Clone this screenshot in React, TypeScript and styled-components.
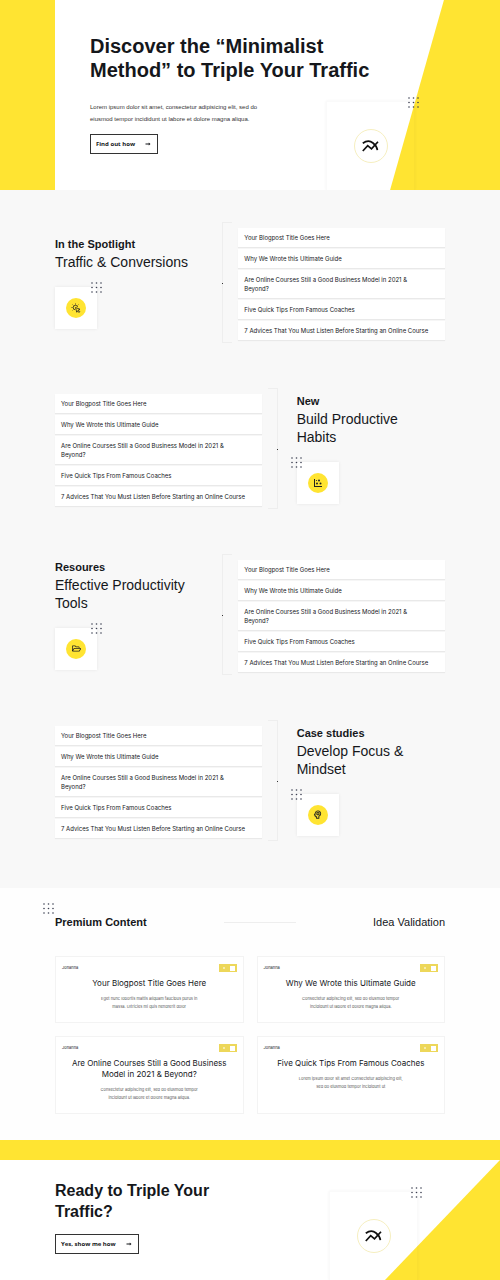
import React from 'react';
import styled, { createGlobalStyle } from 'styled-components';
import { MdOutlinePsychology } from 'react-icons/md';
import { FaRegFolderOpen } from 'react-icons/fa';

const YELLOW = '#ffe432';
const INK = '#15171b';

const GlobalStyle = createGlobalStyle`
  *, *::before, *::after { box-sizing: border-box; }
  body {
    margin: 0;
    background: #fefefe;
    color: ${INK};
    font-family: 'Liberation Sans', Arial, sans-serif;
  }
  h1, h2, h3, p, ul { margin: 0; padding: 0; }
`;

const Banner = styled.header`
  position: relative;
  overflow: hidden;
  padding: 34px 17% 0 18%;
  background: ${YELLOW};

  &::before {
    content: '';
    position: absolute;
    inset: 0 0 0 11%;
    background: #fff;
    clip-path: polygon(0 0, 87.4% 0, 75.3% 100%, 0 100%);
  }
`;

const BannerTitle = styled.h1`
  position: relative;
  margin-right: -20px;
  font-size: 20px;
  line-height: 24px;
`;

const BannerRow = styled.div`
  position: relative;
  display: flex;
  justify-content: space-between;
  align-items: flex-start;
  margin-top: 19px;
`;

const Lead = styled.p`
  margin-bottom: 9px;
  font-size: 6px;
  line-height: 12px;
  color: #333;
`;

const ActionButton = styled.button`
  display: flex;
  align-items: center;
  gap: 10px;
  width: fit-content;
  height: 20px;
  padding: 0 6px 0 5px;
  border: 1px solid #333;
  background: #fff;
  color: ${INK};
  font: 700 6px/12px 'Open Sans', sans-serif;
  white-space: nowrap;
`;

const ChartCard = styled.div`
  position: relative;
  flex: 0 0 89px;
  height: 89px;
  display: flex;
  align-items: center;
  justify-content: center;
  border: 1px solid rgba(0, 0, 0, 0.02);
  border-bottom: 0;
  box-shadow: 0 0 3px rgba(0, 0, 0, 0.05);
`;

const Ring = styled.span`
  display: flex;
  align-items: center;
  justify-content: center;
  width: 34px;
  height: 34px;
  border: 1px solid #f6efc0;
  border-radius: 50%;
  background: #fff;
  color: #111;
`;

const DotsSvg = styled.svg<{ $side: 'left' | 'right' | 'outside' }>`
  position: absolute;
  top: ${p => (p.$side === 'outside' ? '-11px' : '-5px')};
  ${p => (p.$side === 'right' ? 'right: -5px;' : p.$side === 'left' ? 'left: -6px;' : 'left: -12px;')}
  width: 11px;
  height: 11px;
  fill: #3d4152;
`;

const Spotlights = styled.main`
  display: flex;
  flex-direction: column;
  gap: 45px;
  padding: 32px 11% 47px;
  background: #f8f8f8;
`;

const Topic = styled.section<{ $flip: boolean }>`
  display: flex;
  flex-direction: ${p => (p.$flip ? 'row-reverse' : 'row')};
  align-items: center;
  min-height: 121px;
`;

const TopicIntro = styled.div<{ $flip: boolean }>`
  flex: 1;
  padding-left: ${p => (p.$flip ? '19px' : '0')};
`;

const TopicLabel = styled.h2`
  margin-bottom: 1px;
  font-size: 11px;
  line-height: 15px;
`;

const TopicTitle = styled.h3`
  max-width: 140px;
  margin-bottom: 16px;
  font-size: 14px;
  font-weight: 400;
  line-height: 18px;
`;

const IconCard = styled.div`
  position: relative;
  display: flex;
  align-items: center;
  justify-content: center;
  width: 42px;
  height: 42px;
  background: #fff;
  box-shadow: 0 0 3px rgba(0, 0, 0, 0.08);
`;

const IconDisc = styled.span`
  display: flex;
  align-items: center;
  justify-content: center;
  width: 20px;
  height: 20px;
  border-radius: 50%;
  background: ${YELLOW};
  color: #222;
`;

const Bracket = styled.div<{ $flip: boolean }>`
  position: relative;
  align-self: stretch;
  width: 10px;
  margin: ${p => (p.$flip ? '0 0 0 6px' : '0 6px 0 0')};
  border: 1px solid #eeeeee;
  border-${p => (p.$flip ? 'left' : 'right')}: 0;

  &::after {
    content: '';
    position: absolute;
    top: 60px;
    ${p => (p.$flip ? 'right' : 'left')}: -1px;
    width: 1px;
    height: 1px;
    background: #333;
  }
`;

const PostList = styled.ul`
  flex: 0 0 53%;
  display: flex;
  flex-direction: column;
  gap: 2px;
  padding-top: 2px;
  list-style: none;
`;

const PostItem = styled.li`
  padding: 5px 15px 5px 6px;
  background: #fff;
  box-shadow: 0 1px 1px rgba(0, 0, 0, 0.06);
  font-family: Inter, sans-serif;
  font-size: 6px;
  line-height: 9px;
`;

const PostLink = styled.a`
  display: block;
  color: inherit;
  text-decoration: none;
`;

const Premium = styled.section`
  padding: 26px 11%;
  background: #fefefe;
`;

const PremiumHead = styled.div`
  position: relative;
  display: flex;
  align-items: center;
  justify-content: space-between;
  margin-bottom: 26px;
  line-height: 16px;
`;

const PremiumTitle = styled.h2`
  font-size: 11px;
`;

const PremiumTopic = styled.p`
  font-size: 11px;
`;

const Rule = styled.span`
  width: 72px;
  height: 1px;
  background: #eeeeee;
`;

const CardGrid = styled.div`
  display: grid;
  grid-template-columns: 1fr 1fr;
  gap: 13px;
`;

const Card = styled.article`
  padding: 7px 6px 11px;
  border: 1px solid #f3f3f3;
  background: #fff;
  font-family: Inter, sans-serif;
  text-align: center;
`;

const CardTop = styled.div`
  display: flex;
  align-items: flex-start;
  justify-content: space-between;
  height: 14px;
  font-size: 4px;
  line-height: 8px;
`;

const Toggle = styled.input`
  appearance: none;
  position: relative;
  width: 18px;
  height: 8px;
  margin: 0;
  background: #edd75a;

  &::before {
    content: '';
    position: absolute;
    top: 3px;
    left: 4px;
    width: 2px;
    height: 2px;
    background: #f6ebac;
  }

  &::after {
    content: '';
    position: absolute;
    top: 2px;
    right: 2px;
    width: 5px;
    height: 5px;
    background: #fff;
  }
`;

const CardTitle = styled.h3`
  max-width: 164px;
  margin: 0 auto 6px;
  font-size: 8px;
  font-weight: 400;
  line-height: 11px;
`;

const CardText = styled.p`
  font-size: 4px;
  line-height: 8px;
  color: #555;
`;

const Closing = styled.footer`
  position: relative;
  display: flex;
  justify-content: space-between;
  overflow: hidden;
  padding: 20px 82px 0 11%;
  border-top: 20px solid ${YELLOW};
  background: #fff;

  &::before {
    content: '';
    position: absolute;
    inset: 0;
    background: ${YELLOW};
    clip-path: polygon(100% 0, 100% 100%, 77% 100%);
  }
`;

const ClosingCopy = styled.div`
  position: relative;
  flex: 0 1 180px;
`;

const ClosingTitle = styled.h2`
  margin-bottom: 12px;
  font-size: 16px;
  line-height: 21px;
`;

const ClosingArt = styled.div`
  display: flex;
  margin-top: 11px;
`;

const Dots = ({ side }: { side: 'left' | 'right' | 'outside' }) => (
  <DotsSvg $side={side} viewBox="0 0 11 11" aria-hidden="true">
    {[1, 5.5, 10].map(y => [1, 5.5, 10].map(x => <circle key={`${x}-${y}`} cx={x} cy={y} r="0.8" />))}
  </DotsSvg>
);

const ScatterIcon = () => (
  <svg width="10" height="10" viewBox="0 0 20 20" fill="currentColor" aria-hidden="true">
    <path d="M2 2h2v14h14v2H2z" />
    <circle cx="8" cy="11" r="2" />
    <circle cx="12" cy="5" r="2" />
    <circle cx="15" cy="11" r="2" />
    <circle cx="7" cy="5" r="1.2" />
  </svg>
);

const ClickIcon = () => (
  <svg width="10" height="10" viewBox="0 0 20 20" fill="none" stroke="currentColor" strokeWidth="1.6" aria-hidden="true">
    <path d="M8 13.500A4.500 4.500 0 1 1 13.300 8" />
    <path d="M9 1v2M3.300 3.300l1.400 1.400M1 9h2M3.300 14.700l1.400-1.400M14.700 3.300l-1.400 1.400" />
    <path d="M9 9l9 3.500-3.500 1.500 3 3.500-1.500 1.500-3-3.500-1.500 3z" />
  </svg>
);

const TrendIcon = () => (
  <svg width="17" height="12" viewBox="0 0 17 12" fill="none" stroke="currentColor" strokeWidth="1.7" aria-hidden="true">
    <path d="M0.800 3.300C4 1 8 0.600 11 3C13.500 5 15 7 15.400 10.200" />
    <path d="M0.800 11L5.700 5.600L9.500 8.900L16 1.700" />
  </svg>
);

const Arrow = () => (
  <svg width="6" height="6" viewBox="0 0 12 12" aria-hidden="true">
    <path d="M1 5.200h6.500V3L11 6 7.500 9V6.800H1z" fill="currentColor" />
  </svg>
);

const Chart = () => (
  <ChartCard>
    <Ring>
      <TrendIcon />
    </Ring>
    <Dots side="right" />
  </ChartCard>
);

const posts = [
  'Your Blogpost Title Goes Here',
  'Why We Wrote this Ultimate Guide',
  'Are Online Courses Still a Good Business Model in 2021 & Beyond?',
  'Five Quick Tips From Famous Coaches',
  '7 Advices That You Must Listen Before Starting an Online Course',
];

const topics = [
  { label: 'In the Spotlight', title: 'Traffic & Conversions', icon: <ClickIcon /> },
  { label: 'New', title: 'Build Productive Habits', icon: <ScatterIcon /> },
  { label: 'Resoures', title: 'Effective Productivity Tools', icon: <FaRegFolderOpen size={9} /> },
  { label: 'Case studies', title: 'Develop Focus & Mindset', icon: <MdOutlinePsychology size={11} /> },
];

const cards = [
  { title: posts[0], text: ['Eget nunc lobortis mattis aliquam faucibus purus in', 'massa. Ultricies mi quis hendrerit dolor'] },
  { title: posts[1], text: ['Consectetur adipiscing elit, sed do eiusmod tempor', 'incididunt ut labore et dolore magna aliqua.'] },
  { title: posts[2], text: ['Consectetur adipiscing elit, sed do eiusmod tempor', 'incididunt ut labore et dolore magna aliqua.'] },
  { title: posts[3], text: ['Lorem ipsum dolor sit amet Consectetur adipiscing elit,', 'sed do eiusmod tempor incididunt ut'] },
];

export default function App() {
  return (
    <>
      <GlobalStyle />
      <Banner>
        <BannerTitle>
          Discover the “Minimalist
          <br />
          Method” to Triple Your Traffic
        </BannerTitle>
        <BannerRow>
          <div>
            <Lead>
              Lorem ipsum dolor sit amet, consectetur adipisicing elit, sed do
              <br />
              eiusmod tempor incididunt ut labore et dolore magna aliqua.
            </Lead>
            <ActionButton type="button">
              Find out how <Arrow />
            </ActionButton>
          </div>
          <Chart />
        </BannerRow>
      </Banner>

      <Spotlights>
        {topics.map((topic, i) => {
          const flip = i % 2 === 1;
          return (
            <Topic key={topic.label} $flip={flip}>
              <TopicIntro $flip={flip}>
                <TopicLabel>{topic.label}</TopicLabel>
                <TopicTitle>{topic.title}</TopicTitle>
                <IconCard>
                  <IconDisc>{topic.icon}</IconDisc>
                  <Dots side={flip ? 'left' : 'right'} />
                </IconCard>
              </TopicIntro>
              <Bracket $flip={flip} />
              <PostList>
                {posts.map(post => (
                  <PostItem key={post}>
                    <PostLink href="#">{post}</PostLink>
                  </PostItem>
                ))}
              </PostList>
            </Topic>
          );
        })}
      </Spotlights>

      <Premium>
        <PremiumHead>
          <Dots side="outside" />
          <PremiumTitle>Premium Content</PremiumTitle>
          <Rule />
          <PremiumTopic>Idea Validation</PremiumTopic>
        </PremiumHead>
        <CardGrid>
          {cards.map(card => (
            <Card key={card.title}>
              <CardTop>
                <span>Johanna</span>
                <Toggle type="checkbox" defaultChecked aria-label={card.title} />
              </CardTop>
              <CardTitle>{card.title}</CardTitle>
              <CardText>
                {card.text[0]}
                <br />
                {card.text[1]}
              </CardText>
            </Card>
          ))}
        </CardGrid>
      </Premium>

      <Closing>
        <ClosingCopy>
          <ClosingTitle>Ready to Triple Your Traffic?</ClosingTitle>
          <ActionButton type="button">
            Yes, show me how <Arrow />
          </ActionButton>
        </ClosingCopy>
        <ClosingArt>
          <Chart />
        </ClosingArt>
      </Closing>
    </>
  );
}
